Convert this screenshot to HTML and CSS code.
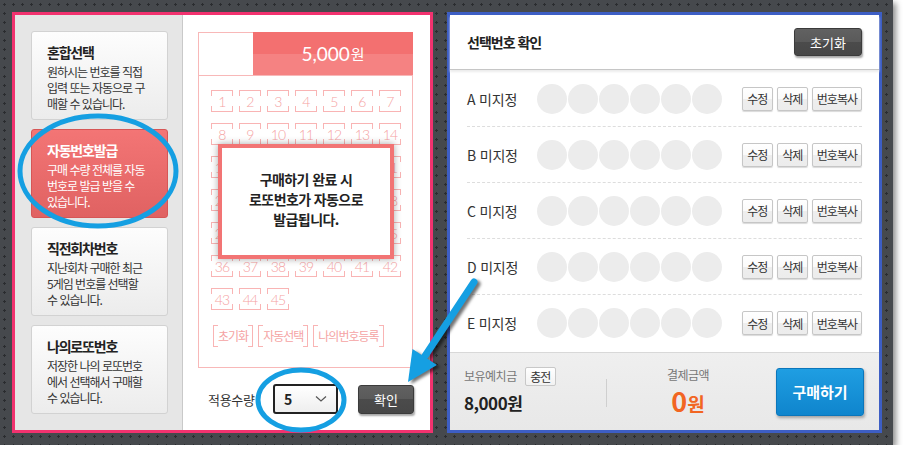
FILE: index.html
```html
<!DOCTYPE html>
<html lang="ko">
<head>
<meta charset="utf-8">
<title>로또 구매</title>
<link rel="stylesheet" href="styles.css">
</head>
<body>
<div class="screen">
  <div class="panel-left">
    <div class="menu">
      <div class="card">
        <div class="card-title">혼합선택</div>
        <div class="card-desc">원하시는 번호를 직접<br>입력 또는 자동으로 구<br>매할 수 있습니다.</div>
      </div>
      <div class="card active">
        <div class="card-title">자동번호발급</div>
        <div class="card-desc">구매 수량 전체를 자동<br>번호로 발급 받을 수<br>있습니다.</div>
      </div>
      <div class="card">
        <div class="card-title">직전회차번호</div>
        <div class="card-desc">지난회차 구매한 최근<br>5게임 번호를 선택할<br>수 있습니다.</div>
      </div>
      <div class="card">
        <div class="card-title">나의로또번호</div>
        <div class="card-desc">저장한 나의 로또번호<br>에서 선택해서 구매할<br>수 있습니다.</div>
      </div>
    </div>
    <div class="work">
      <div class="ticket">
        <div class="ticket-head">
          <div class="head-blank"></div>
          <div class="head-price"><span class="price-num">5,000</span><span class="price-won">원</span></div>
        </div>
        <div class="grid">
          <span class="cell">1</span><span class="cell">2</span><span class="cell">3</span><span class="cell">4</span><span class="cell">5</span><span class="cell">6</span><span class="cell">7</span>
          <span class="cell">8</span><span class="cell">9</span><span class="cell">10</span><span class="cell">11</span><span class="cell">12</span><span class="cell">13</span><span class="cell">14</span>
          <span class="cell">15</span><span class="cell under">16</span><span class="cell under">17</span><span class="cell under">18</span><span class="cell under">19</span><span class="cell under">20</span><span class="cell">21</span>
          <span class="cell">22</span><span class="cell under">23</span><span class="cell under">24</span><span class="cell under">25</span><span class="cell under">26</span><span class="cell under">27</span><span class="cell">28</span>
          <span class="cell">29</span><span class="cell under">30</span><span class="cell under">31</span><span class="cell under">32</span><span class="cell under">33</span><span class="cell under">34</span><span class="cell">35</span>
          <span class="cell">36</span><span class="cell">37</span><span class="cell">38</span><span class="cell">39</span><span class="cell">40</span><span class="cell">41</span><span class="cell">42</span>
          <span class="cell">43</span><span class="cell">44</span><span class="cell">45</span>
        </div>
        <div class="ticket-actions">
          <span class="bracket">초기화</span>
          <span class="bracket">자동선택</span>
          <span class="bracket">나의번호등록</span>
        </div>
        <div class="popup">
          <p>구매하기 완료 시<br>로또번호가 자동으로<br>발급됩니다.</p>
        </div>
      </div>
      <div class="apply-row">
        <span class="apply-label">적용수량</span>
        <div class="select">
          <span class="select-val">5</span>
          <svg class="chev" width="12" height="8" viewBox="0 0 12 8"><polyline points="1,1.5 6,6 11,1.5" fill="none" stroke="#555" stroke-width="1.2"/></svg>
        </div>
        <button class="btn-dark btn-ok">확인</button>
      </div>
    </div>
  </div>

  <div class="panel-right">
    <div class="right-head">
      <h2 class="right-title">선택번호 확인</h2>
      <button class="btn-dark btn-reset">초기화</button>
    </div>
    <div class="rows">
      <div class="row">
        <span class="row-label">A 미지정</span>
        <div class="balls"><i></i><i></i><i></i><i></i><i></i><i></i></div>
        <div class="row-btns"><button class="btn-sm">수정</button><button class="btn-sm">삭제</button><button class="btn-sm">번호복사</button></div>
      </div>
      <div class="row">
        <span class="row-label">B 미지정</span>
        <div class="balls"><i></i><i></i><i></i><i></i><i></i><i></i></div>
        <div class="row-btns"><button class="btn-sm">수정</button><button class="btn-sm">삭제</button><button class="btn-sm">번호복사</button></div>
      </div>
      <div class="row">
        <span class="row-label">C 미지정</span>
        <div class="balls"><i></i><i></i><i></i><i></i><i></i><i></i></div>
        <div class="row-btns"><button class="btn-sm">수정</button><button class="btn-sm">삭제</button><button class="btn-sm">번호복사</button></div>
      </div>
      <div class="row">
        <span class="row-label">D 미지정</span>
        <div class="balls"><i></i><i></i><i></i><i></i><i></i><i></i></div>
        <div class="row-btns"><button class="btn-sm">수정</button><button class="btn-sm">삭제</button><button class="btn-sm">번호복사</button></div>
      </div>
      <div class="row last">
        <span class="row-label">E 미지정</span>
        <div class="balls"><i></i><i></i><i></i><i></i><i></i><i></i></div>
        <div class="row-btns"><button class="btn-sm">수정</button><button class="btn-sm">삭제</button><button class="btn-sm">번호복사</button></div>
      </div>
    </div>
    <div class="pay-bar">
      <div class="deposit">
        <div class="deposit-top"><span class="muted">보유예치금</span><button class="btn-charge">충전</button></div>
        <div class="deposit-amt">8,000원</div>
      </div>
      <div class="vdiv"></div>
      <div class="total">
        <div class="muted">결제금액</div>
        <div class="total-amt"><span class="total-num">0</span><span class="total-won">원</span></div>
      </div>
      <button class="btn-buy">구매하기</button>
    </div>
  </div>

  <svg class="annot" width="903" height="456" viewBox="0 0 903 456">
    <ellipse cx="98" cy="171" rx="78" ry="55" fill="none" stroke="#159fe2" stroke-width="5"/>
    <ellipse cx="301" cy="400" rx="43" ry="30" fill="none" stroke="#159fe2" stroke-width="5"/>
    <g class="arrow">
      <line x1="474" y1="282" x2="425" y2="356" stroke="#159fe2" stroke-width="7" stroke-linecap="round"/>
      <polygon points="408,382 412.5,349 437,365" fill="#159fe2"/>
    </g>
  </svg>
</div>
</body>
</html>
```
FILE: styles.css
```css
* { box-sizing: border-box; }

body {
  margin: 0;
  background: #ffffff;
  font-family: "Noto Sans CJK KR", "Noto Sans", sans-serif;
  color: #333;
}

button {
  font-family: inherit;
  cursor: pointer;
}

.screen {
  position: relative;
  width: 893px;
  height: 445px;
  padding: 12px 0 0 12px;
  display: flex;
  align-items: flex-start;
  gap: 14px;
  background-color: #46494d;
  background-image: url("data:image/svg+xml,%3Csvg xmlns='http://www.w3.org/2000/svg' width='9' height='9'%3E%3Cpath d='M4 3h1v3H4zM3 4h3v1H3z' fill='%232a2c2f'/%3E%3C/svg%3E");
  box-shadow: 3px 3px 6px rgba(0, 0, 0, 0.45);
}

/* ---------- left panel ---------- */
.panel-left {
  width: 421px;
  height: 421px;
  border: 3px solid #f2326f;
  display: flex;
  background: #fff;
}

.menu {
  width: 168px;
  background: #e6e6e6;
  border-right: 1px solid #c9c9c9;
  padding: 16px 0 0 16px;
  display: flex;
  flex-direction: column;
  gap: 9px;
}

.card {
  width: 137px;
  height: 89px;
  border: 1px solid #d2d2d2;
  border-radius: 3px;
  background: linear-gradient(#fdfdfd, #ececec);
  padding: 11px 6px 0 15px;
  white-space: nowrap;
}

.card-title {
  font-size: 14px;
  font-weight: 700;
  line-height: 18px;
  letter-spacing: -1.2px;
  color: #222;
  margin-bottom: 3px;
}

.card-desc {
  font-size: 12px;
  line-height: 16px;
  letter-spacing: -1px;
  color: #333;
}

.card.active {
  background: linear-gradient(#f37575, #e06262);
  border-color: #d65656;
}

.card.active .card-title,
.card.active .card-desc {
  color: #fff;
}

.work {
  flex: 1;
  padding: 17px 0 0 15px;
  background: #fff;
}

/* ticket */
.ticket {
  position: relative;
  width: 215px;
  height: 336px;
  border: 1px solid #f8b8b8;
}

.ticket-head {
  display: flex;
  height: 43px;
  border-bottom: 1px solid #f8b8b8;
}

.head-blank {
  width: 54px;
}

.head-price {
  flex: 1;
  margin: -1px -1px 0 0;
  height: 43px;
  background: linear-gradient(#f37070 0, #f37070 51%, #f58282 51%, #f58282 100%);
  color: #fff;
  display: flex;
  align-items: center;
  justify-content: center;
  gap: 1px;
}

.price-num {
  font-family: Lato, "Noto Sans", sans-serif;
  font-size: 19px;
  line-height: 20px;
}

.price-won {
  font-size: 15px;
  line-height: 20px;
}

.grid {
  display: grid;
  grid-template-columns: repeat(7, 22px);
  column-gap: 6px;
  row-gap: 11px;
  padding: 14px 0 0 12px;
}

.cell {
  --c: #f9b4b4;
  width: 22px;
  height: 22px;
  display: flex;
  align-items: center;
  justify-content: center;
  font-family: Lato, "Noto Sans", sans-serif;
  font-weight: 300;
  font-size: 14px;
  letter-spacing: -0.8px;
  color: #f5a3a3;
  background:
    linear-gradient(var(--c), var(--c)) left top / 100% 1px no-repeat,
    linear-gradient(var(--c), var(--c)) left bottom / 100% 1px no-repeat,
    linear-gradient(var(--c), var(--c)) left top / 1px 6px no-repeat,
    linear-gradient(var(--c), var(--c)) right top / 1px 6px no-repeat,
    linear-gradient(var(--c), var(--c)) left bottom / 1px 6px no-repeat,
    linear-gradient(var(--c), var(--c)) right bottom / 1px 6px no-repeat;
}

.cell.under {
  visibility: hidden;
}

.ticket-actions {
  display: flex;
  gap: 5px;
  padding: 15px 0 0 14px;
}

.bracket {
  --c: #f9b4b4;
  height: 22px;
  padding: 0 5px;
  font-size: 12px;
  line-height: 22px;
  letter-spacing: -1px;
  color: #f5a3a3;
  background:
    linear-gradient(var(--c), var(--c)) left top / 1px 100% no-repeat,
    linear-gradient(var(--c), var(--c)) right top / 1px 100% no-repeat,
    linear-gradient(var(--c), var(--c)) left top / 5px 1px no-repeat,
    linear-gradient(var(--c), var(--c)) left bottom / 5px 1px no-repeat,
    linear-gradient(var(--c), var(--c)) right top / 5px 1px no-repeat,
    linear-gradient(var(--c), var(--c)) right bottom / 5px 1px no-repeat;
}

.popup {
  position: absolute;
  left: 19px;
  top: 111px;
  width: 176px;
  height: 115px;
  border: 4px solid #f27474;
  background: #fff;
  box-shadow: 0 0 7px rgba(0, 0, 0, 0.35);
  display: flex;
  align-items: center;
  justify-content: center;
  padding-bottom: 5px;
}

.popup p {
  margin: 0;
  text-align: center;
  font-size: 14px;
  font-weight: 700;
  line-height: 20px;
  letter-spacing: -0.6px;
  color: #222;
}

.apply-row {
  display: flex;
  align-items: center;
  margin-top: 16px;
  padding-left: 10px;
  height: 30px;
}

.apply-label {
  font-size: 13px;
  letter-spacing: -0.3px;
  color: #333;
  width: 65px;
}

.select {
  width: 65px;
  height: 30px;
  border: 2px solid #222;
  border-radius: 3px;
  background: linear-gradient(#fff, #eee);
  display: flex;
  align-items: center;
  justify-content: space-between;
  padding: 0 9px 0 9px;
}

.select-val {
  font-size: 14px;
  font-weight: 700;
  color: #222;
}

.btn-dark {
  border: 1px solid #3b3b3b;
  border-radius: 3px;
  background: linear-gradient(#616161 0, #5a5a5a 50%, #4b4b4b 50%, #474747 100%);
  color: #fff;
  font-size: 13px;
  box-shadow: 1px 2px 2px rgba(0, 0, 0, 0.35);
  padding: 0;
}

.btn-ok {
  width: 56px;
  height: 29px;
  margin-left: 20px;
}

/* ---------- right panel ---------- */
.panel-right {
  width: 435px;
  height: 421px;
  border: 3px solid #3d5ec4;
  background: #fff;
  display: flex;
  flex-direction: column;
}

.right-head {
  height: 55px;
  border-bottom: 1px solid #c6c6c6;
  box-shadow: 0 2px 2px #ececec;
  display: flex;
  align-items: center;
  justify-content: space-between;
  padding: 0 17px;
}

.right-title {
  margin: 0;
  font-size: 14px;
  font-weight: 700;
  letter-spacing: -1px;
  color: #222;
}

.btn-reset {
  width: 68px;
  height: 28px;
}

.rows {
  padding: 1px 17px 0;
}

.row {
  height: 56px;
  display: flex;
  align-items: center;
  border-bottom: 1px dashed #dddddd;
}

.row.last {
  border-bottom: none;
}

.row-label {
  width: 70px;
  font-size: 14px;
  letter-spacing: -0.2px;
  color: #333;
}

.balls {
  display: flex;
  gap: 1px;
}

.balls i {
  width: 30px;
  height: 30px;
  border-radius: 50%;
  background: #ececec;
}

.row-btns {
  margin-left: auto;
  display: flex;
  gap: 4px;
}

.btn-sm {
  height: 24px;
  padding: 0 4px;
  min-width: 31px;
  border: 1px solid #c6c6c6;
  border-radius: 2px;
  background: linear-gradient(#ffffff 0, #fafafa 50%, #eeeeee 50%, #ececec 100%);
  box-shadow: 0 1px 1px rgba(0, 0, 0, 0.15);
  font-size: 12px;
  letter-spacing: -1px;
  color: #333;
}

.pay-bar {
  margin-top: auto;
  height: 78px;
  border-top: 1px solid #d8d8d8;
  background: linear-gradient(#efefef, #e8e8e8);
  display: flex;
  align-items: center;
  padding: 0 15px 0 14px;
}

.deposit {
  width: 142px;
  padding-bottom: 2px;
}

.deposit-top {
  display: flex;
  align-items: center;
  gap: 8px;
  height: 18px;
}

.muted {
  font-size: 12px;
  letter-spacing: -0.5px;
  color: #777;
  line-height: 18px;
}

.btn-charge {
  width: 31px;
  height: 19px;
  padding: 0;
  border: 1px solid #c8c8c8;
  border-radius: 2px;
  background: linear-gradient(#fff, #f2f2f2);
  font-size: 12px;
  letter-spacing: -1px;
  color: #333;
}

.deposit-amt {
  margin-top: 7px;
  font-size: 17px;
  font-weight: 700;
  line-height: 22px;
  letter-spacing: -0.5px;
  color: #222;
}

.vdiv {
  width: 1px;
  height: 28px;
  background: #cfcfcf;
  margin-top: 2px;
}

.total {
  width: 162px;
  text-align: center;
}

.total-amt {
  margin-top: 4px;
  line-height: 26px;
  color: #f26522;
  font-weight: 700;
}

.total-num {
  font-size: 27px;
}

.total-won {
  font-size: 19px;
}

.btn-buy {
  margin-left: auto;
  width: 88px;
  height: 48px;
  border: 1px solid #0b76bb;
  border-radius: 3px;
  background: linear-gradient(#1f9ee2, #0f85cd);
  box-shadow: 1px 2px 3px rgba(0, 0, 0, 0.3);
  color: #fff;
  font-size: 15px;
  font-weight: 700;
  padding: 0;
}

/* ---------- annotations ---------- */
.annot {
  position: absolute;
  left: 0;
  top: 0;
  pointer-events: none;
}

.arrow {
  filter: drop-shadow(3px 2px 1.5px rgba(0, 0, 0, 0.55));
}
```
